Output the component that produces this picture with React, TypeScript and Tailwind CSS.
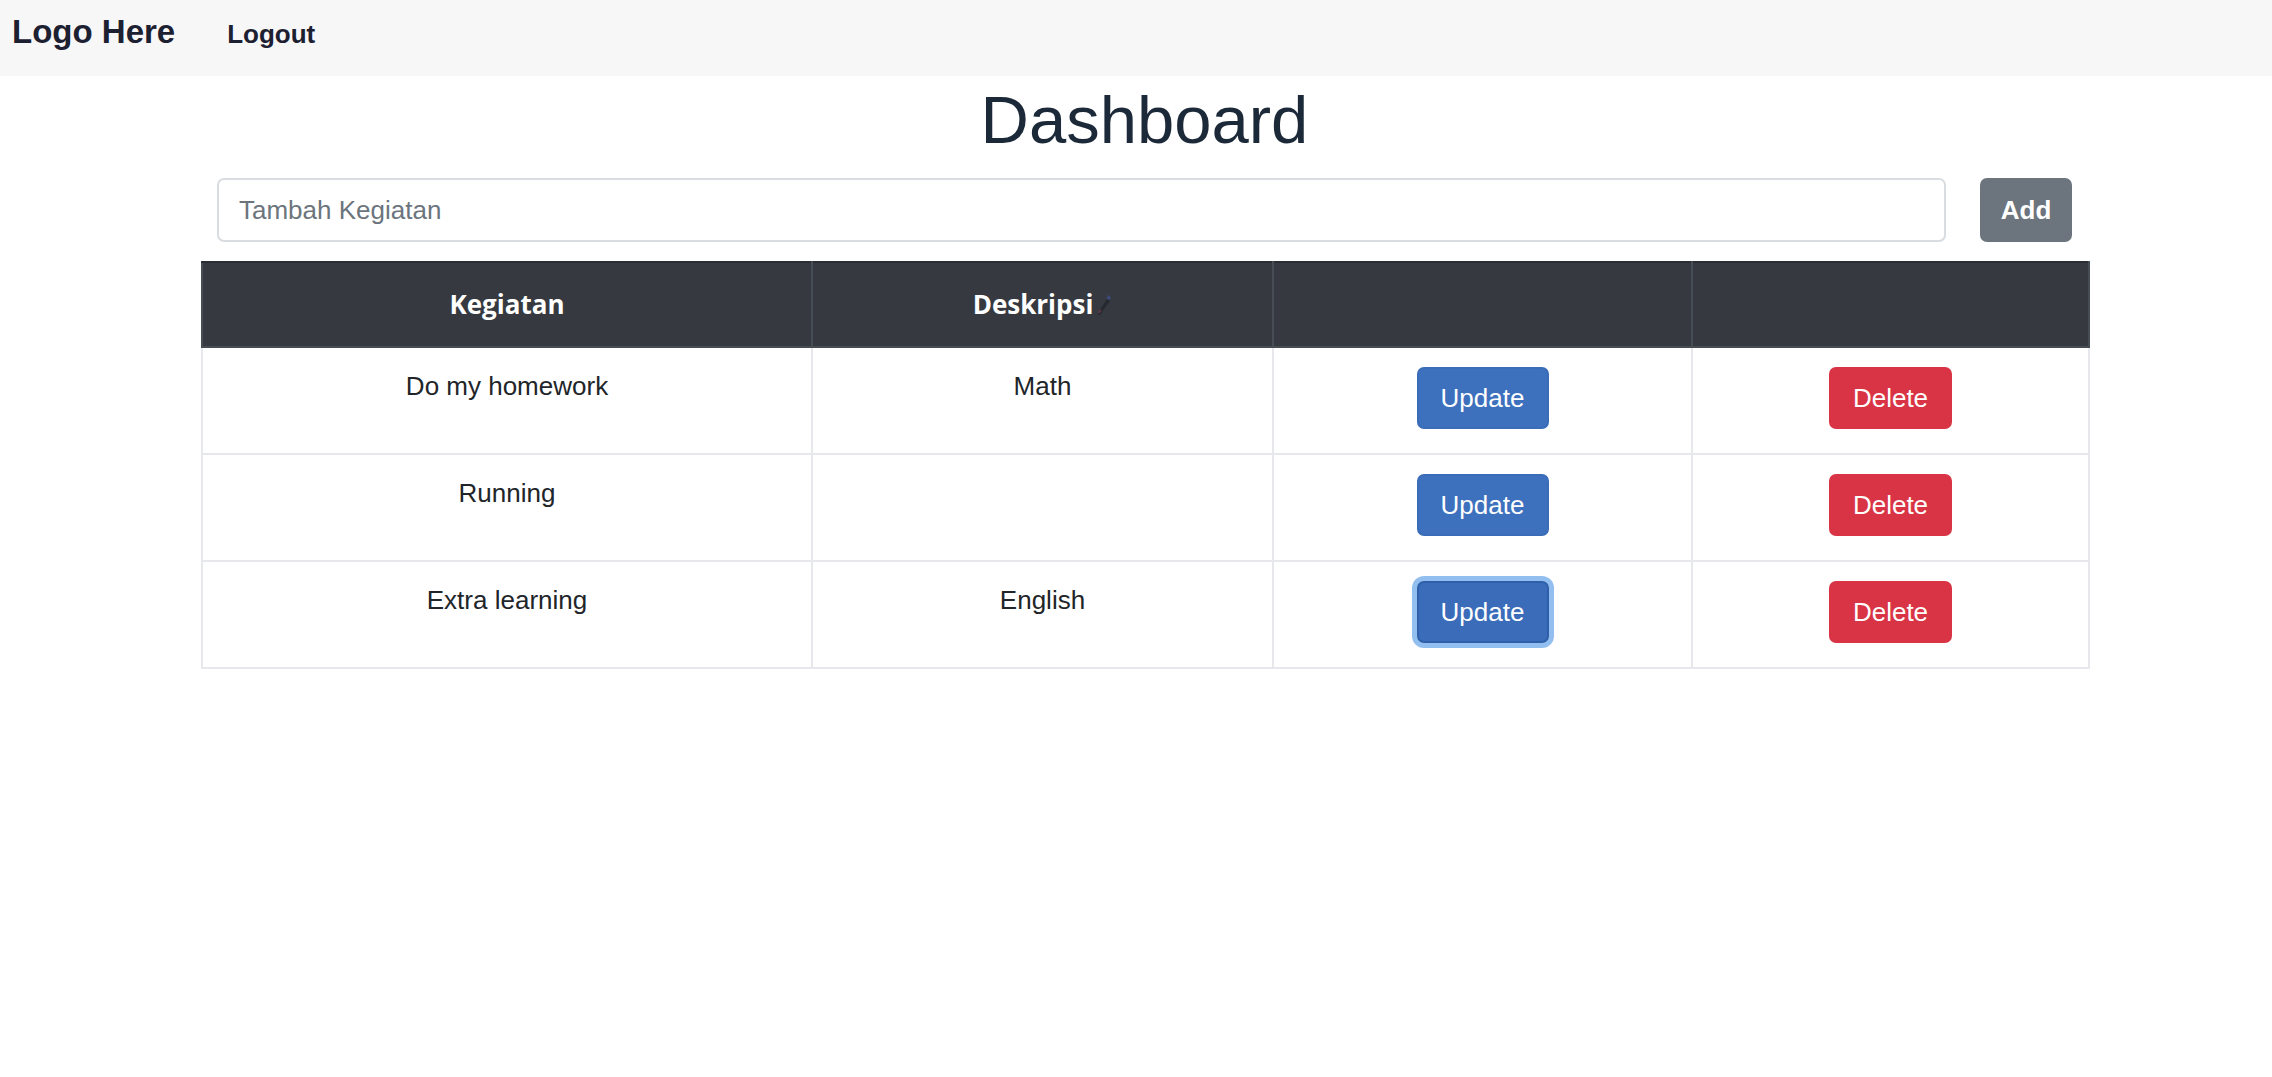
import React from 'react';

type Kegiatan = { nama: string; deskripsi: string; focused?: boolean };

const daftar: Kegiatan[] = [
  { nama: 'Do my homework', deskripsi: 'Math' },
  { nama: 'Running', deskripsi: '' },
  { nama: 'Extra learning', deskripsi: 'English', focused: true },
];

// ikon kecil di samping "Deskripsi"
const PenMark = () => (
  <svg width="18" height="26" viewBox="0 0 18 26" className="inline-block align-middle ml-[1px] -mt-[4px]">
    <path d="M3 22 L13 7 L16 9 L6 23 Z" fill="#26292f" />
    <path d="M12 6 L15 3 L17 6 L15 8 Z" fill="#3b4a78" />
    <path d="M4 21 L7 18" stroke="#5a3a44" strokeWidth="2" />
  </svg>
);

const Navbar = () => (
  <nav className="h-[76px] bg-[#f7f7f8] flex items-baseline pl-[12px] pt-[7px]">
    <span className="text-[33px] leading-[49px] font-bold text-[#1d2030]">Logo Here</span>
    <a className="ml-[52px] text-[26px] leading-[40px] font-bold text-[#1d2030]">Logout</a>
  </nav>
);

const Row = ({ item }: { item: Kegiatan }) => (
  <tr>
    <td className="border-2 border-[#e6e8eb] text-center align-top pt-[18px] pb-[25px] text-[26px] leading-[40px] text-[#212529]">
      {item.nama}
    </td>
    <td className="border-2 border-[#e6e8eb] text-center align-top pt-[18px] pb-[25px] text-[26px] leading-[40px] text-[#212529]">
      {item.deskripsi}
    </td>
    <td className="border-2 border-[#e6e8eb] text-center align-top pt-[19px] pb-[24px]">
      <button
        className={
          item.focused
            ? 'h-[62px] w-[132px] rounded-[7px] bg-[#3a6cba] border-2 border-[#2f5fa8] text-white text-[26px] shadow-[0_0_0_5px_rgba(110,170,235,0.75)]'
            : 'h-[62px] w-[132px] rounded-[7px] bg-[#3d70bd] border-2 border-[#3a6cb8] text-white text-[26px]'
        }
      >
        Update
      </button>
    </td>
    <td className="border-2 border-[#e6e8eb] text-center align-top pt-[19px] pb-[24px]">
      <button className="h-[62px] w-[123px] rounded-[7px] bg-[#d93445] border-2 border-[#d93445] text-white text-[26px]">
        Delete
      </button>
    </td>
  </tr>
);

export default function App() {
  return (
    <div className="min-h-screen bg-white font-['Liberation_Sans',Arial,sans-serif]">
      <Navbar />

      <div className="ml-[201px] w-[1887px]">
        <h1 className="mt-[4px] text-center text-[67px] leading-[79px] font-normal text-[#1c2939]">Dashboard</h1>

        <div className="mt-[19px] flex items-center px-[16px] gap-[34px]">
          <input
            type="text"
            placeholder="Tambah Kegiatan"
            className="flex-1 h-[64px] px-[20px] rounded-[7px] border-2 border-[#d9dde1] text-[26px] text-[#495057] placeholder:text-[#6c757d] outline-none"
          />
          <button className="h-[64px] w-[92px] rounded-[7px] bg-[#6c757d] text-white text-[26px] font-bold">Add</button>
        </div>

        <table className="mt-[19px] w-[1887px] table-fixed border-collapse">
          <colgroup>
            <col className="w-[610px]" />
            <col className="w-[461px]" />
            <col className="w-[419px]" />
            <col className="w-[397px]" />
          </colgroup>
          <thead>
            <tr className="bg-[#363a40]">
              <th className="h-[85px] border-2 border-[#474d55] border-t-[#2a2d31] text-white text-[26px] font-bold font-['Open_Sans',sans-serif]">
                Kegiatan
              </th>
              <th className="h-[85px] border-2 border-[#474d55] border-t-[#2a2d31] text-white text-[26px] font-bold font-['Open_Sans',sans-serif]">
                Deskripsi
                <PenMark />
              </th>
              <th className="h-[85px] border-2 border-[#474d55] border-t-[#2a2d31]"></th>
              <th className="h-[85px] border-2 border-[#474d55] border-t-[#2a2d31]"></th>
            </tr>
          </thead>
          <tbody>
            {daftar.map((item, i) => (
              <Row key={i} item={item} />
            ))}
          </tbody>
        </table>
      </div>
    </div>
  );
}
